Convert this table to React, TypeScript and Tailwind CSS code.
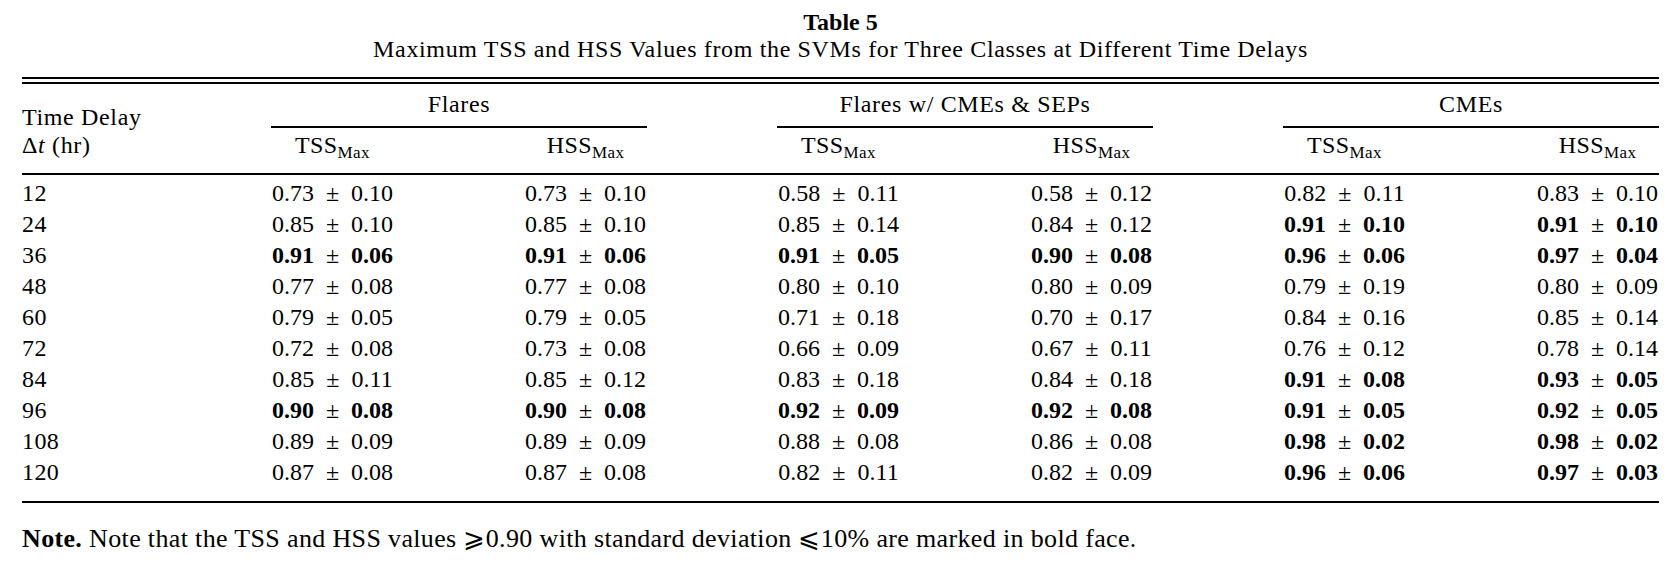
import React from 'react';

type Cell = { v: string; e: string; b?: boolean };

const c = (s: string, b = false): Cell => {
  const [v, e] = s.split(' ');
  return { v, e, b };
};

const rows: { dt: string; cells: Cell[] }[] = [
  { dt: '12', cells: [c('0.73 0.10'), c('0.73 0.10'), c('0.58 0.11'), c('0.58 0.12'), c('0.82 0.11'), c('0.83 0.10')] },
  { dt: '24', cells: [c('0.85 0.10'), c('0.85 0.10'), c('0.85 0.14'), c('0.84 0.12'), c('0.91 0.10', true), c('0.91 0.10', true)] },
  { dt: '36', cells: [c('0.91 0.06', true), c('0.91 0.06', true), c('0.91 0.05', true), c('0.90 0.08', true), c('0.96 0.06', true), c('0.97 0.04', true)] },
  { dt: '48', cells: [c('0.77 0.08'), c('0.77 0.08'), c('0.80 0.10'), c('0.80 0.09'), c('0.79 0.19'), c('0.80 0.09')] },
  { dt: '60', cells: [c('0.79 0.05'), c('0.79 0.05'), c('0.71 0.18'), c('0.70 0.17'), c('0.84 0.16'), c('0.85 0.14')] },
  { dt: '72', cells: [c('0.72 0.08'), c('0.73 0.08'), c('0.66 0.09'), c('0.67 0.11'), c('0.76 0.12'), c('0.78 0.14')] },
  { dt: '84', cells: [c('0.85 0.11'), c('0.85 0.12'), c('0.83 0.18'), c('0.84 0.18'), c('0.91 0.08', true), c('0.93 0.05', true)] },
  { dt: '96', cells: [c('0.90 0.08', true), c('0.90 0.08', true), c('0.92 0.09', true), c('0.92 0.08', true), c('0.91 0.05', true), c('0.92 0.05', true)] },
  { dt: '108', cells: [c('0.89 0.09'), c('0.89 0.09'), c('0.88 0.08'), c('0.86 0.08'), c('0.98 0.02', true), c('0.98 0.02', true)] },
  { dt: '120', cells: [c('0.87 0.08'), c('0.87 0.08'), c('0.82 0.11'), c('0.82 0.09'), c('0.96 0.06', true), c('0.97 0.03', true)] },
];

const groups = ['Flares', 'Flares w/ CMEs & SEPs', 'CMEs'];

const gridCols = 'grid grid-cols-[119px_repeat(6,123px)] gap-x-[130px]';

function Sub({ name }: { name: string }) {
  return (
    <span className="tracking-[0.4px]">
      {name}
      <span className="relative top-[5px] text-[17px]">Max</span>
    </span>
  );
}

function Value({ cell }: { cell: Cell }) {
  const w = cell.b ? 'font-bold' : '';
  return (
    <div className="text-center whitespace-nowrap">
      <span className={w}>{cell.v}</span>
      <span className="inline-block mx-[12px]">±</span>
      <span className={w}>{cell.e}</span>
    </div>
  );
}

export default function App() {
  return (
    <div className="bg-white min-h-screen text-black text-[24px] font-['Liberation_Serif','DejaVu_Serif',serif]">
      <div className="w-[1637px] ml-[22px] pt-[9px]">
        {/* Caption */}
        <div className="text-center leading-[27px] font-bold">Table 5</div>
        <div className="text-center leading-[27px] tracking-[0.65px]">
          Maximum TSS and HSS Values from the SVMs for Three Classes at Different Time Delays
        </div>

        {/* Double top rule */}
        <div className="mt-[14px] border-t-2 border-black" />
        <div className="mt-[3px] border-t-2 border-black" />

        {/* Header */}
        <div className={`${gridCols} pb-[11px] border-b-2 border-black`}>
          <div className="row-span-2 pt-[19px] leading-[28px] whitespace-nowrap tracking-[0.65px]">
            <div>Time Delay</div>
            <div>
              Δ<span className="italic">t</span> (hr)
            </div>
          </div>
          {groups.map((g) => (
            <div
              key={g}
              className="col-span-2 pt-[6px] pb-[8px] leading-[28px] text-center border-b-2 border-black whitespace-nowrap tracking-[0.65px]"
            >
              {g}
            </div>
          ))}
          {[0, 1, 2].map((i) => (
            <React.Fragment key={i}>
              <div className="pt-[3px] leading-[28px] text-center whitespace-nowrap">
                <Sub name="TSS" />
              </div>
              <div className="pt-[3px] leading-[28px] text-center whitespace-nowrap">
                <Sub name="HSS" />
              </div>
            </React.Fragment>
          ))}
        </div>

        {/* Body */}
        <div className="pt-[3px] pb-[13px] border-b-2 border-black leading-[31px]">
          {rows.map((r) => (
            <div key={r.dt} className={gridCols}>
              <div className="tracking-[0.4px]">{r.dt}</div>
              {r.cells.map((cell, i) => (
                <Value key={i} cell={cell} />
              ))}
            </div>
          ))}
        </div>

        {/* Note */}
        <div className="mt-[22px] leading-[28px] text-[26px] tracking-[0.35px] whitespace-nowrap">
          <span className="font-bold">Note.</span> Note that the TSS and HSS values ⩾0.90 with standard deviation
          ⩽10% are marked in bold face.
        </div>
      </div>
    </div>
  );
}
